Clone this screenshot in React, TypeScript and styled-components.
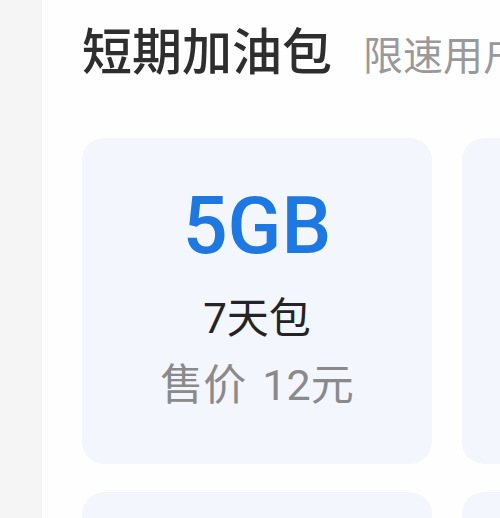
import styled, { createGlobalStyle } from 'styled-components'

const GlobalStyle = createGlobalStyle`
  html, body {
    margin: 0;
    padding: 0;
    background: #f5f5f6;
    overflow: hidden;
  }
  body {
    font-family: Roboto, 'Noto Sans CJK SC', sans-serif;
  }
`

const packs = [
  { size: '5GB', days: '7天包', price: 12 },
  { size: '10GB', days: '7天包', price: 20 },
  { size: '3GB', days: '3天包', price: 6 },
  { size: '20GB', days: '30天包', price: 30 },
]

export default function App() {
  return (
    <>
      <GlobalStyle />
      <Page>
        <Sidebar />
        <Panel>
          <Header>
            <Title>短期加油包</Title>
            <Subtitle>限速用户可购买</Subtitle>
          </Header>
          <Grid>
            {packs.map((p, i) => (
              <Card key={i}>
                <Size>{p.size}</Size>
                <Days>{p.days}</Days>
                <Price>
                  售价<Amount>{p.price}元</Amount>
                </Price>
              </Card>
            ))}
          </Grid>
        </Panel>
      </Page>
    </>
  )
}

const Page = styled.div`
  display: flex;
  width: 500px;
  height: 518px;
  overflow: hidden;
`

const Sidebar = styled.div`
  flex: 0 0 42px;
  background: #f5f5f6;
`

const Panel = styled.div`
  flex: 0 0 auto;
  width: 900px;
  background: #fefefe;
  padding: 18px 0 0 40px;
`

const Header = styled.div`
  display: flex;
  align-items: baseline;
  gap: 31px;
  height: 120px;
`

const Title = styled.h1`
  margin: 0;
  font-family: 'Noto Sans CJK SC', sans-serif;
  font-size: 50px;
  line-height: 60px;
  font-weight: 500;
  color: #2e2e2e;
`

const Subtitle = styled.span`
  font-family: 'Noto Sans CJK SC', sans-serif;
  font-size: 40px;
  color: #999;
  white-space: nowrap;
`

const Grid = styled.div`
  display: grid;
  grid-template-columns: 350px 350px;
  grid-auto-rows: 326px;
  gap: 28px 30px;
`

const Card = styled.div`
  display: flex;
  flex-direction: column;
  align-items: center;
  padding-top: 48px;
  border-radius: 22px;
  background: #f3f6fc;
`

const Size = styled.div`
  font-family: Roboto, sans-serif;
  font-size: 79px;
  font-weight: 500;
  line-height: 80px;
  color: #1d78e2;
`

const Days = styled.div`
  margin-top: 28px;
  font-size: 42px;
  line-height: 50px;
  color: #242424;
`

const Price = styled.div`
  margin-top: 16px;
  font-size: 43px;
  line-height: 50px;
  color: #8a8a8a;
`

const Amount = styled.span`
  margin-left: 16px;
`
